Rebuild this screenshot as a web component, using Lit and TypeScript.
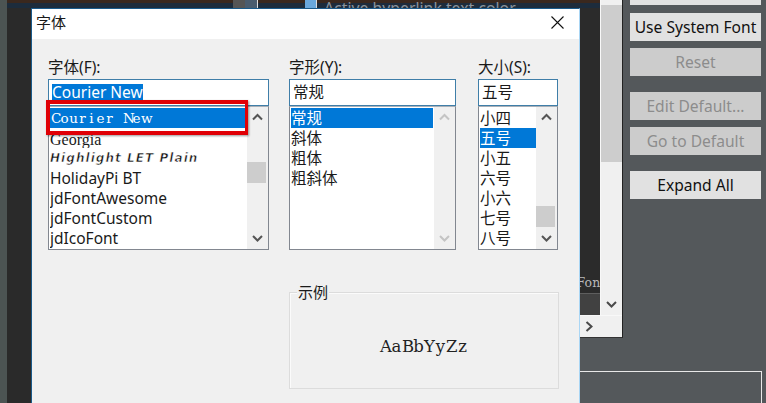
import { LitElement, html, css, svg } from "lit";
import { customElement } from "lit/decorators.js";

type Row = { t: string; cls?: string };
type ListDef = {
  label: string;
  value: string;
  selectValue?: boolean;
  w: number;
  rows: Row[];
  sel: number;
  thumb: number | null;
  disabled?: boolean;
  rowGap: number;
};

const chev = (dir: "up" | "down" | "right", color = "#555") => {
  const d =
    dir === "up" ? "M1 6.5 L5.5 2 L10 6.5" : dir === "down" ? "M1 2 L5.5 6.5 L10 2" : "M2.5 1 L7.5 5.5 L2.5 10";
  return svg`<svg width="11" height="${dir === "right" ? 11 : 9}" viewBox="0 0 11 ${dir === "right" ? 11 : 9}"><path d="${d}" fill="none" stroke="${color}" stroke-width="2"/></svg>`;
};

/* Fixed-pitch slab look: every character sits in an equal cell, as in Courier. */
const cells = (text: string) => [...text].map((c) => html`<span class="cell">${c}</span>`);

const lists: ListDef[] = [
  {
    label: "字体(F):",
    value: "Courier New",
    selectValue: true,
    w: 221,
    sel: 0,
    thumb: 55,
    rowGap: 2,
    rows: [
      { t: "Courier New", cls: "mono" },
      { t: "Georgia", cls: "georgia" },
      { t: "Highlight LET Plain", cls: "fancy" },
      { t: "HolidayPi BT" },
      { t: "jdFontAwesome" },
      { t: "jdFontCustom" },
      { t: "jdIcoFont" },
    ],
  },
  {
    label: "字形(Y):",
    value: "常规",
    w: 167,
    sel: 0,
    thumb: null,
    disabled: true,
    rowGap: 1,
    rows: [{ t: "常规" }, { t: "斜体" }, { t: "粗体" }, { t: "粗斜体" }],
  },
  {
    label: "大小(S):",
    value: "五号",
    w: 80,
    sel: 1,
    thumb: 99,
    rowGap: 0,
    rows: [
      { t: "小四" },
      { t: "五号" },
      { t: "小五" },
      { t: "六号" },
      { t: "小六" },
      { t: "七号" },
      { t: "八号" },
    ],
  },
];

@customElement("app-root")
export class AppRoot extends LitElement {
  static styles = css`
    :host {
      display: block;
      width: 766px;
      height: 403px;
      overflow: hidden;
      font-family: "Noto Sans", "Noto Sans CJK SC", sans-serif;
      font-size: 15.5px;
      color: #1a1a1a;
    }
    .desk {
      position: relative;
      width: 766px;
      height: 403px;
      background: #54585b;
      display: grid;
      grid-template-columns: 7px 24px 592px 143px;
      grid-template-rows: 338px 33px 32px;
      overflow: hidden;
    }
    .edge {
      grid-column: 1;
      grid-row: 1 / 4;
      background: #4c5453;
    }
    .side {
      grid-column: 2;
      grid-row: 1 / 4;
      background: linear-gradient(#3a281e 0 3px, #1d2c3c 3px 8px, #2a2a2a 8px);
    }
    .panel {
      grid-column: 3;
      grid-row: 1;
      display: flex;
      flex-direction: column;
      border-right: 1px solid #222;
      border-bottom: 1px solid #333;
      background: #f0f0f0;
      min-height: 0;
    }
    .panel-top {
      flex: 1;
      display: flex;
      min-height: 0;
    }
    .editor {
      flex: 1;
      display: flex;
      flex-direction: column;
      background: #2b2b2b;
      min-width: 0;
      border-right: 1px solid #f8f8f8;
    }
    .strip {
      height: 8px;
      flex: none;
      overflow: hidden;
      display: flex;
      background: linear-gradient(#3a281e 0 3px, #1d2c3c 3px);
    }
    .strip .a {
      margin-left: 202px;
      width: 12px;
      background: #555;
    }
    .strip .b {
      width: 12px;
      background: #4a5c6e;
      border-right: 1px solid #ddd;
    }
    .strip .check {
      margin-left: 47px;
      width: 11px;
      background: #6aa8dc;
      border-right: 1px solid #ddd;
    }
    .strip .label {
      margin-left: 7px;
      font-size: 15.8px;
      line-height: 16px;
      color: #8b939b;
      white-space: nowrap;
    }
    .spacer {
      flex: 1;
    }
    .preview {
      font-family: "DejaVu Serif", serif;
      font-size: 12.5px;
      line-height: 16px;
      color: #b8b8b8;
      text-align: right;
      white-space: nowrap;
      overflow: hidden;
      margin-bottom: 2px;
    }
    .preview .cell {
      width: 7.8px;
    }
    .cell {
      display: inline-block;
      text-align: center;
    }
    .foot {
      height: 21px;
      background: #414141;
      border-top: 1px solid #5e5e5e;
    }
    .vbar {
      width: 21px;
      flex: none;
      background: #f0f0f0;
      display: flex;
      flex-direction: column;
      align-items: center;
    }
    .vbar .cap {
      height: 5px;
      flex: none;
    }
    .vbar .big {
      height: 157px;
      flex: none;
      width: 100%;
      background: #cdcdcd;
    }
    .vbar .fill {
      flex: 1;
    }
    .vbar .dn {
      height: 21px;
      flex: none;
      display: flex;
      align-items: center;
      justify-content: center;
    }
    .hbar {
      height: 21px;
      flex: none;
      border-top: 1px solid #f8f8f8;
      display: flex;
      justify-content: flex-end;
      align-items: center;
      padding-right: 27px;
    }
    .buttons {
      grid-column: 4;
      grid-row: 1 / 3;
      padding-left: 7px;
      display: flex;
      flex-direction: column;
    }
    .btn {
      width: 131px;
      height: 28px;
      flex: none;
      background: #e1e1e1;
      display: flex;
      align-items: center;
      justify-content: center;
      font-size: 15.6px;
      color: #111;
      margin-bottom: 7px;
    }
    .btn.off {
      background: #cccccc;
      color: #8c8c8c;
    }
    .btn.stub {
      height: 5px;
      margin-bottom: 8px;
    }
    .btn.sep {
      margin-bottom: 16px;
    }
    .lower {
      grid-column: 3 / 5;
      grid-row: 3;
      margin-right: 4px;
      border-top: 1px solid #e8e8e8;
      border-right: 1px solid #e8e8e8;
    }

    .dialog {
      position: absolute;
      left: 31px;
      top: 8px;
      width: 549px;
      height: 400px;
      box-sizing: border-box;
      background: #f0f0f0;
      border: 1px solid #1a5a8a;
      border-right-color: #a9d6f5;
      display: flex;
      flex-direction: column;
    }
    .title {
      height: 30px;
      flex: none;
      box-sizing: border-box;
      background: #fff;
      display: flex;
      align-items: center;
      justify-content: space-between;
      padding: 0 15px 4px 4px;
      font-size: 15px;
    }
    .title span {
      margin-top: -2px;
    }
    .title svg {
      display: block;
      margin-top: 1px;
    }
    .body {
      padding: 19px 0 0 16px;
      position: relative;
    }
    .cols {
      display: flex;
    }
    .col + .col {
      margin-left: 20px;
    }
    .col:last-child {
      margin-left: 22px;
    }
    .lab {
      height: 21px;
      line-height: 19px;
      font-size: 15.5px;
    }
    .input {
      height: 27px;
      box-sizing: border-box;
      border: 1px solid #3f7ea8;
      background: #fff;
      padding-left: 3px;
      display: flex;
      align-items: center;
      font-size: 15.5px;
      line-height: 17px;
    }
    .input .hl {
      background: #0078d7;
      color: #fff;
    }
    .list {
      height: 144px;
      box-sizing: border-box;
      border: 1px solid #828790;
      border-top-color: #a9b0b8;
      background: #fff;
      display: flex;
    }
    .rows {
      flex: 1;
      min-width: 0;
      padding: 1px 0 0 1px;
      overflow: hidden;
    }
    .row {
      height: 20px;
      line-height: 20px;
      font-size: 15.5px;
      white-space: nowrap;
      overflow: hidden;
    }
    .row.sel {
      background: #0078d7;
      color: #fff;
    }
    .row.mono {
      font-family: "DejaVu Serif", serif;
      font-size: 13.5px;
      line-height: 20px;
      padding-left: 1px;
    }
    .row.mono .cell {
      width: 9px;
    }
    .row.georgia {
      font-family: "Liberation Serif", serif;
      font-size: 16px;
      line-height: 23px;
    }
    .row.fancy {
      font-family: "DejaVu Sans", sans-serif;
      font-weight: 700;
      font-style: italic;
      font-size: 12px;
      letter-spacing: 1.05px;
      color: #111;
      -webkit-text-stroke: 0.55px #fff;
    }
    .sb {
      width: 21px;
      flex: none;
      background: #f0f0f0;
      display: flex;
      flex-direction: column;
      position: relative;
    }
    .sb .arrow {
      height: 21px;
      flex: none;
      display: flex;
      align-items: center;
      justify-content: center;
    }
    .sb .track {
      flex: 1;
    }
    .sb .thumb {
      width: 19px;
      height: 21px;
      background: #cdcdcd;
    }
    .group {
      position: relative;
      box-sizing: border-box;
      margin: 42px 0 0 241px;
      width: 270px;
      height: 97px;
      border: 1px solid #dcdcdc;
      box-shadow: inset 1px 1px 0 #fbfbfb;
      display: flex;
      justify-content: center;
      padding-top: 44px;
    }
    .group .legend {
      position: absolute;
      left: 7px;
      top: -11px;
      padding: 0 1px;
      background: #f0f0f0;
      font-size: 15px;
      line-height: 20px;
    }
    .sample {
      font-family: "DejaVu Serif", serif;
      font-size: 16.5px;
      line-height: 20px;
      color: #222;
    }
    .sample .cell {
      width: 11px;
    }
    .mark {
      position: absolute;
      left: 14px;
      top: 61px;
      width: 202px;
      height: 35px;
      box-sizing: border-box;
      border: 4px solid #e00006;
      border-right-width: 3px;
      box-shadow: 1px 1px 2px rgba(0, 0, 0, 0.4);
    }
  `;

  private renderList(l: ListDef) {
    return html`
      <div class="col" style="width:${l.w}px">
        <div class="lab">${l.label}</div>
        <div class="input">${l.selectValue ? html`<span class="hl">${l.value}</span>` : l.value}</div>
        <div class="list">
          <div class="rows" style="margin-right:${l.rowGap}px">
            ${l.rows.map(
              (r, i) =>
                html`<div class="row ${r.cls ?? ""} ${i === l.sel ? "sel" : ""}">
                  ${r.cls === "mono" ? cells(r.t) : r.t}
                </div>`
            )}
          </div>
          <div class="sb">
            <div class="arrow">${chev("up", l.disabled ? "#c4c4c4" : "#555")}</div>
            <div class="track">
              ${l.thumb !== null ? html`<div class="thumb" style="margin-top:${l.thumb - 21}px"></div>` : ""}
            </div>
            <div class="arrow">${chev("down", l.disabled ? "#c4c4c4" : "#555")}</div>
          </div>
        </div>
      </div>
    `;
  }

  render() {
    return html`
      <div class="desk">
        <div class="edge"></div>
        <div class="side"></div>
        <div class="panel">
          <div class="panel-top">
            <div class="editor">
              <div class="strip">
                <div class="a"></div>
                <div class="b"></div>
                <div class="check"></div>
                <div class="label">Active hyperlink text color</div>
              </div>
              <div class="spacer"></div>
              <div class="preview">${cells("Fon")}</div>
              <div class="foot"></div>
            </div>
            <div class="vbar">
              <div class="cap"></div>
              <div class="big"></div>
              <div class="fill"></div>
              <div class="dn">${chev("down", "#4a4a4a")}</div>
            </div>
          </div>
          <div class="hbar">${chev("right", "#4a4a4a")}</div>
        </div>
        <div class="buttons">
          <div class="btn stub"></div>
          <div class="btn">Use System Font</div>
          <div class="btn off sep">Reset</div>
          <div class="btn off">Edit Default...</div>
          <div class="btn off sep">Go to Default</div>
          <div class="btn">Expand All</div>
        </div>
        <div class="lower"></div>

        <div class="dialog">
          <div class="title">
            <span>字体</span>
            <svg width="13" height="13" viewBox="0 0 13 13"><path d="M0.5 0.5 L12.5 12.5 M12.5 0.5 L0.5 12.5" stroke="#111" stroke-width="1.1" fill="none"/></svg>
          </div>
          <div class="body">
            <div class="cols">${lists.map((l) => this.renderList(l))}</div>
            <div class="group">
              <div class="legend">示例</div>
              <div class="sample">${cells("AaBbYyZz")}</div>
            </div>
            <div class="mark"></div>
          </div>
        </div>
      </div>
    `;
  }
}
